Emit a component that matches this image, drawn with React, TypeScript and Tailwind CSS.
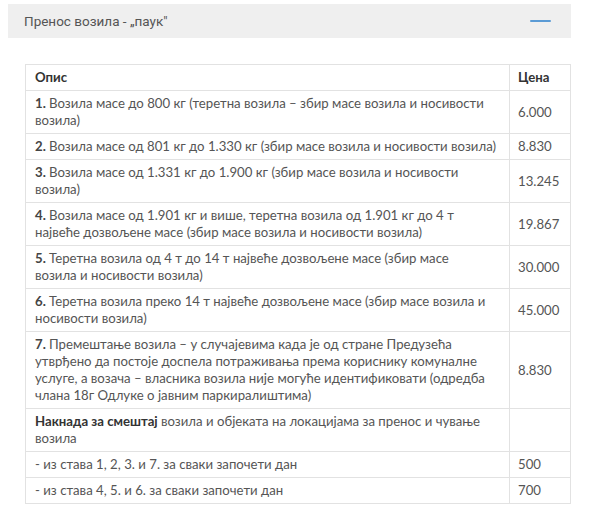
const rows: { num?: string; bold?: string; text: string; price: string }[] = [
  { num: '1.', text: 'Возила масе до 800 кг (теретна возила – збир масе возила и носивости возила)', price: '6.000' },
  { num: '2.', text: 'Возила масе од 801 кг до 1.330 кг (збир масе возила и носивости возила)', price: '8.830' },
  { num: '3.', text: 'Возила масе од 1.331 кг до 1.900 кг (збир масе возила и носивости возила)', price: '13.245' },
  { num: '4.', text: 'Возила масе од 1.901 кг и више, теретна возила од 1.901 кг до 4 т\nнајвеће дозвољене масе (збир масе возила и носивости возила)', price: '19.867' },
  { num: '5.', text: 'Теретна возила од 4 т до 14 т највеће дозвољене масе (збир масе\nвозила и носивости возила)', price: '30.000' },
  { num: '6.', text: 'Теретна возила преко 14 т највеће дозвољене масе (збир масе возила и носивости возила)', price: '45.000' },
  { num: '7.', text: 'Премештање возила – у случајевима када је од стране Предузећа утврђено да постоје доспела потраживања према кориснику комуналне услуге, а возача – власника возила није могуће идентификовати (одредба члана 18г Одлуке о јавним паркиралиштима)', price: '8.830' },
  { bold: 'Накнада за смештај', text: 'возила и објеката на локацијама за пренос и чување возила', price: '' },
  { text: '- из става 1, 2, 3. и 7. за сваки започети дан', price: '500' },
  { text: '- из става 4, 5. и 6. за сваки започети дан', price: '700' },
];

function Lines({ text }: { text: string }) {
  const parts = text.split('\n');
  return (
    <>
      {parts.map((p, i) => (
        <span key={i}>
          {i > 0 && <br />}
          {p}
        </span>
      ))}
    </>
  );
}

export default function App() {
  return (
    <div className="w-[592px] h-[506px] overflow-hidden bg-white font-['Lato',sans-serif]">
      {/* Accordion header */}
      <div className="ml-2 mr-[21px] mt-1 h-[34px] bg-[#efefef] flex items-center justify-between pl-4 pr-5">
        <span className="font-['Roboto',sans-serif] text-[13.5px] text-[#555]">Пренос возила - „паук"</span>
        <span className="block w-[21px] h-[2px] bg-[#5b9bd5] rounded-sm" />
      </div>

      {/* Price table */}
      <div className="ml-[25px] mr-[21px] mt-[26px]">
        <table className="w-full border-collapse text-[13.2px] leading-[17px] text-[#555]">
          <thead>
            <tr>
              <th className="border border-[#e2e2e2] text-left font-bold text-[#333] px-[9px] py-1">Опис</th>
              <th className="w-[61px] border border-[#e2e2e2] text-left font-bold text-[#333] px-[8px] py-1">Цена</th>
            </tr>
          </thead>
          <tbody>
            {rows.map((r, i) => (
              <tr key={i}>
                <td className="border border-[#e2e2e2] px-[9px] py-1 align-middle">
                  {r.num && <b className="font-bold text-[#444]">{r.num} </b>}
                  {r.bold && <b className="font-bold text-[#333]">{r.bold} </b>}
                  <Lines text={r.text} />
                </td>
                <td className="border border-[#e2e2e2] px-[8px] py-1 align-middle">{r.price}</td>
              </tr>
            ))}
          </tbody>
        </table>
      </div>
    </div>
  );
}
